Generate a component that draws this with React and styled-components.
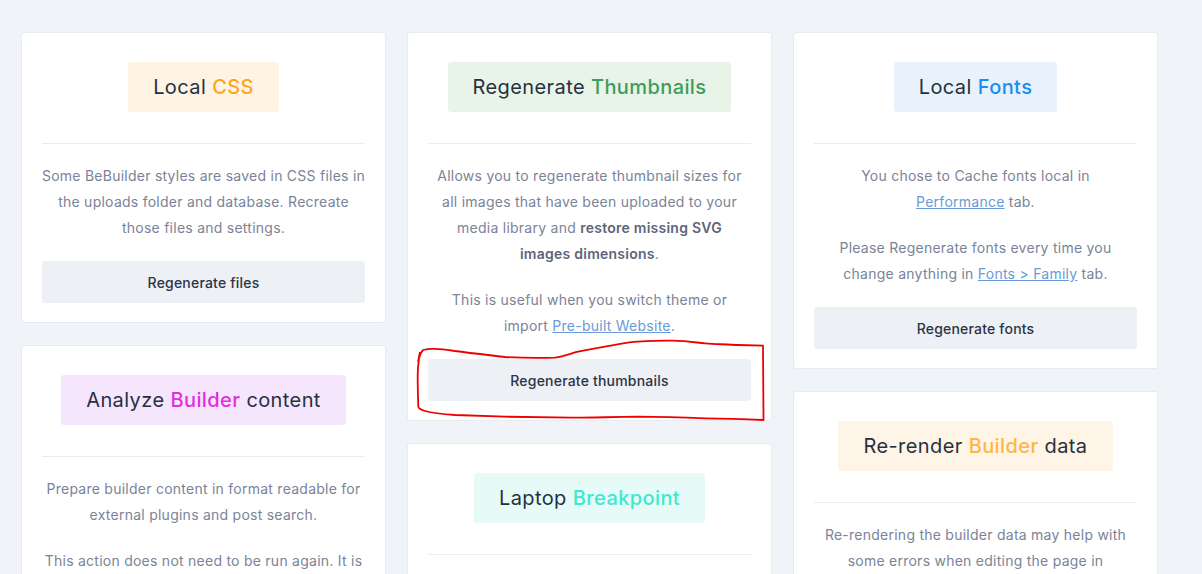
import React from 'react';
import styled, { createGlobalStyle } from 'styled-components';

const GlobalStyle = createGlobalStyle`
  html, body {
    margin: 0;
    padding: 0;
    background: #f0f3f7;
    font-family: Inter, "Open Sans", sans-serif;
  }
`;

const Page = styled.div`
  position: relative;
  display: grid;
  grid-template-columns: repeat(3, 365px);
  column-gap: 21px;
  padding: 32px 21px;
  align-items: start;
`;

const Column = styled.div`
  display: flex;
  flex-direction: column;
  gap: 22px;
`;

const Card = styled.div`
  background: #fff;
  border: 1px solid #e7ebf0;
  border-radius: 3px;
  padding: 29px 20px 19px;
  display: flex;
  flex-direction: column;
  align-items: center;
`;

const TitleBadge = styled.h3`
  margin: 0;
  padding: 12px 25px;
  border-radius: 3px;
  font-size: 20px;
  line-height: 26px;
  font-weight: 400;
  color: #27303f;
  background: ${(p) => p.bg};
  letter-spacing: 0.4px;

  b {
    font-weight: 500;
    color: ${(p) => p.accent};
  }
`;

const Divider = styled.hr`
  width: 100%;
  border: 0;
  border-top: 1px solid #e9ecf2;
  margin: 31px 0 19px;
`;

// line breaks follow the original layout, so keep lines from re-wrapping
const Text = styled.p`
  margin: 0 0 20px;
  text-align: center;
  white-space: nowrap;
  font-size: 14px;
  line-height: 26px;
  color: #7b8398;
  letter-spacing: 0.25px;

  strong {
    font-weight: 600;
    color: #5c6579;
  }

  a {
    color: #6a9ad8;
    text-decoration: underline;
  }
`;

const ActionButton = styled.button`
  width: 100%;
  height: 42px;
  border: 0;
  border-radius: 3px;
  background: #edf0f5;
  color: #2b3445;
  font-family: inherit;
  font-size: 14px;
  font-weight: 500;
  letter-spacing: 0.2px;
  cursor: pointer;
`;

const Scribble = styled.svg`
  position: absolute;
  left: 0;
  top: 0;
  pointer-events: none;
`;

const scribblePath =
  'M423 350 C430 348 438 348 455 351 C470 353 488 355 505 357 C521 358 540 358 555 357.7 C565 356 572 353 578 351.7 C590 349 598 348 605 346.7 C620 344 630 342 638 341.7 C650 341 660 340.5 672 340.7 C690 341 698 343 705 343.3 C720 344 730 345 738 345 L763 345.7 L763.5 420 C740 419 720 418.5 705 418.3 C680 417.5 660 417 638 416.7 C610 417 590 417.8 572 417.7 C545 417.5 525 417 505 416.7 C485 416 470 415.5 455 415 C440 414 432 413 425 411 C420 409.5 418.5 408 418.3 406.7 C418 395 417.6 385 417.7 375 C417.8 368 418.5 362 419 358.3 C420 354 421.5 351.5 423 350 M418 362 L420 352';

function App() {
  return (
    <>
      <GlobalStyle />
      <Page>
        <Column>
          <Card>
            <TitleBadge bg="#fff4e3" accent="#fca61f">
              Local <b>CSS</b>
            </TitleBadge>
            <Divider />
            <Text>
              Some BeBuilder styles are saved in CSS files in<br />
              the uploads folder and database. Recreate<br />
              those files and settings.
            </Text>
            <ActionButton>Regenerate files</ActionButton>
          </Card>
          <Card>
            <TitleBadge bg="#f5e6fd" accent="#e22ee0">
              Analyze <b>Builder</b> content
            </TitleBadge>
            <Divider />
            <Text>
              Prepare builder content in format readable for<br />
              external plugins and post search.
            </Text>
            <Text>
              This action does not need to be run again. It is<br />
              performed automatically every time you save<br />
              the page.
            </Text>
            <ActionButton>Analyze content</ActionButton>
          </Card>
        </Column>

        <Column>
          <Card>
            <TitleBadge bg="#e7f4e7" accent="#3e9c5f">
              Regenerate <b>Thumbnails</b>
            </TitleBadge>
            <Divider />
            <Text>
              Allows you to regenerate thumbnail sizes for<br />
              all images that have been uploaded to your<br />
              media library and <strong>restore missing SVG</strong>
              <br />
              <strong>images dimensions</strong>.
            </Text>
            <Text>
              This is useful when you switch theme or<br />
              import <a href="#prebuilt">Pre-built Website</a>.
            </Text>
            <ActionButton>Regenerate thumbnails</ActionButton>
          </Card>
          <Card>
            <TitleBadge bg="#e6fbf8" accent="#3fe9cd">
              Laptop <b>Breakpoint</b>
            </TitleBadge>
            <Divider />
            <Text>
              Regenerate the laptop breakpoint styles<br />
              after changing the responsive settings.
            </Text>
            <ActionButton>Regenerate breakpoint</ActionButton>
          </Card>
        </Column>

        <Column>
          <Card>
            <TitleBadge bg="#e8f2fd" accent="#1b8df0">
              Local <b>Fonts</b>
            </TitleBadge>
            <Divider />
            <Text>
              You chose to Cache fonts local in<br />
              <a href="#performance">Performance</a> tab.
            </Text>
            <Text>
              Please Regenerate fonts every time you<br />
              change anything in <a href="#fonts">Fonts &gt; Family</a> tab.
            </Text>
            <ActionButton>Regenerate fonts</ActionButton>
          </Card>
          <Card>
            <TitleBadge bg="#fff5e7" accent="#fbb843">
              Re-render <b>Builder</b> data
            </TitleBadge>
            <Divider />
            <Text>
              Re-rendering the builder data may help with<br />
              some errors when editing the page in<br />
              BeBuilder.
            </Text>
            <ActionButton>Re-render data</ActionButton>
          </Card>
        </Column>

        <Scribble width="1202" height="574" viewBox="0 0 1202 574">
          <path d={scribblePath} fill="none" stroke="#ee0000" strokeWidth="1.8" strokeLinejoin="round" />
        </Scribble>
      </Page>
    </>
  );
}

export default App;
